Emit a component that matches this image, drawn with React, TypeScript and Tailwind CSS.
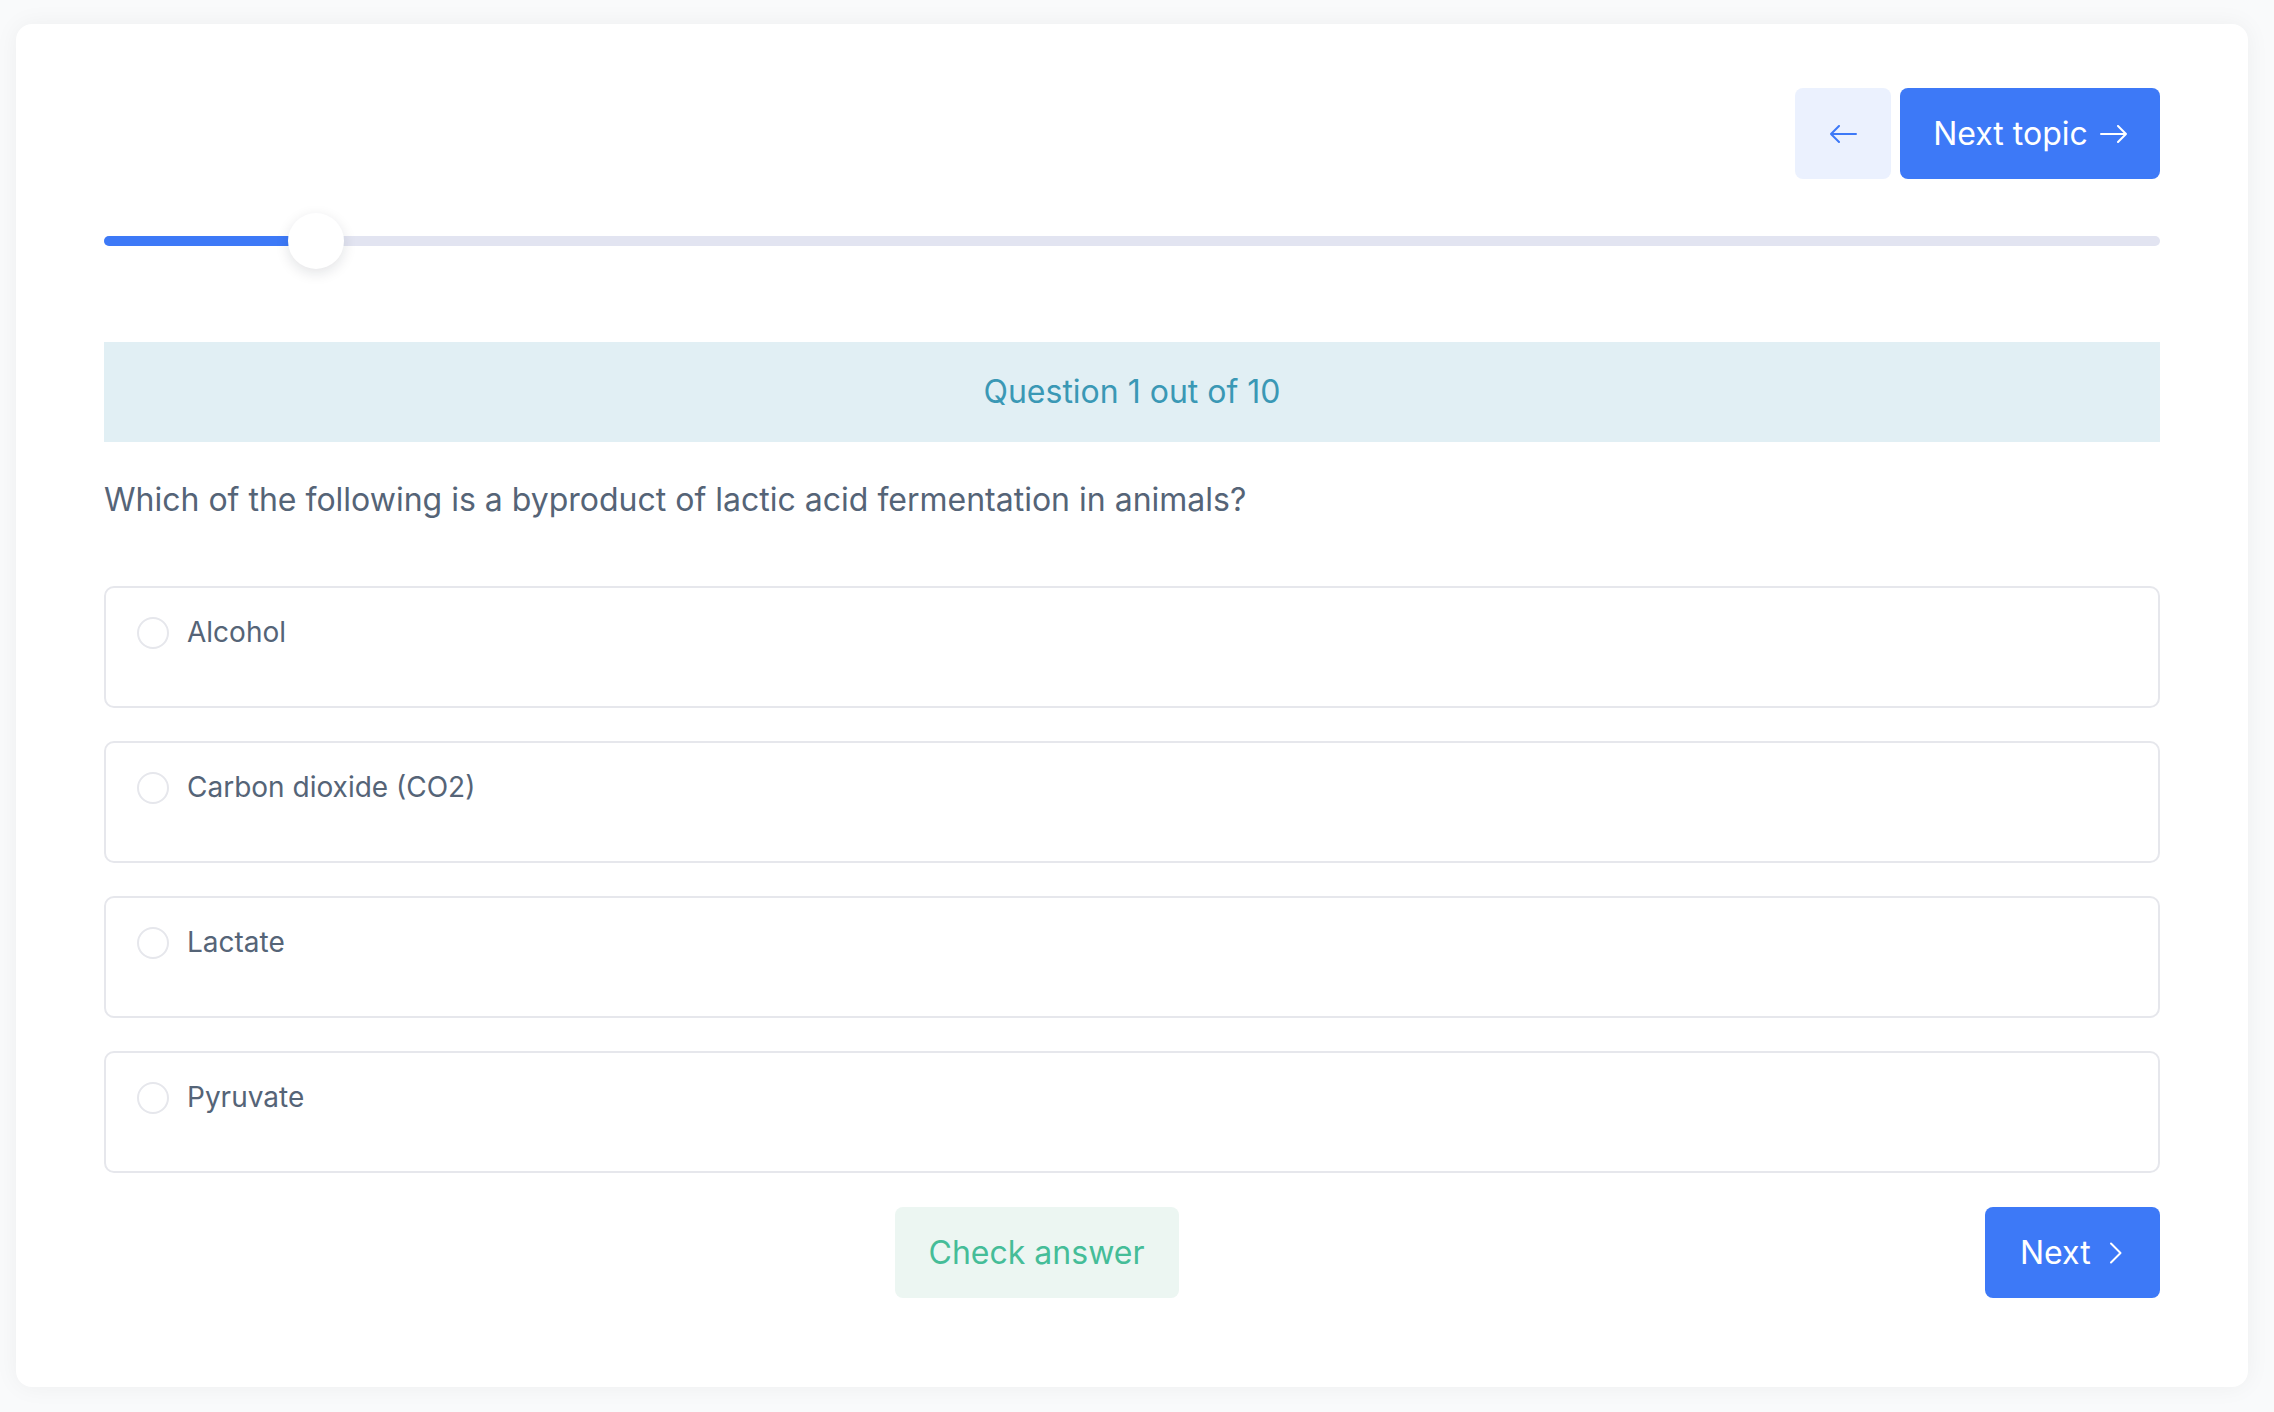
import React from "react";

const options = ["Alcohol", "Carbon dioxide (CO2)", "Lactate", "Pyruvate"];

function Slider({ value }: { value: number }) {
  return (
    <div className="relative h-[56px] flex items-center">
      <div className="w-full h-[10px] rounded-full bg-[#e2e4f1]" />
      <div
        className="absolute left-0 top-[23px] h-[10px] rounded-full bg-[#3d79f7]"
        style={{ width: `${value}px` }}
      />
      <div
        className="absolute top-0 w-[56px] h-[56px] rounded-full bg-white shadow-[0_4px_14px_rgba(15,23,42,0.12)]"
        style={{ left: `${value - 16}px` }}
      />
    </div>
  );
}

function Arrow({ dir, color }: { dir: "left" | "right"; color: string }) {
  const d = dir === "left" ? "M1 9 H26 M1 9 L9 1 M1 9 L9 17" : "M1 9 H26 M26 9 L18 1 M26 9 L18 17";
  return (
    <svg width="27" height="18" viewBox="0 0 27 18" fill="none">
      <path d={d} stroke={color} strokeWidth="2" strokeLinecap="round" strokeLinejoin="round" />
    </svg>
  );
}

function Option({ label }: { label: string }) {
  return (
    <label className="flex items-start h-[122px] rounded-[10px] border-2 border-[#e6e7ec] bg-white px-[31px] pt-[22px] cursor-pointer">
      <div className="flex items-center gap-[18px] h-[45px]">
        <span className="w-[32px] h-[32px] rounded-full border-2 border-[#e6e7ec] bg-white" />
        <span className="text-[28px] leading-[45px] text-[#556477]">{label}</span>
      </div>
    </label>
  );
}

export default function App() {
  return (
    <div
      className="min-h-[1412px] w-full bg-[#f9fafb] pl-[16px] pr-[26px] pt-[24px] pb-[25px]"
      style={{ fontFamily: "Inter, 'Noto Sans', sans-serif" }}
    >
      <div className="bg-white rounded-2xl shadow-[0_0_24px_rgba(15,23,42,0.05)] px-[88px] pt-[64px] pb-[89px]">
        {/* top navigation */}
        <div className="flex justify-end gap-[9px] h-[91px]">
          <button className="w-[96px] h-[91px] rounded-[8px] bg-[#ebf1fe] flex items-center justify-center">
            <Arrow dir="left" color="#3d79f7" />
          </button>
          <button className="w-[260px] h-[91px] rounded-[8px] bg-[#3d79f7] text-white text-[32px] flex items-center justify-center gap-[12px]">
            <span>Next topic</span>
            <Arrow dir="right" color="#ffffff" />
          </button>
        </div>

        {/* progress */}
        <div className="mt-[34px]">
          <Slider value={200} />
        </div>

        {/* question counter */}
        <div className="mt-[73px] h-[100px] bg-[#e1eff4] flex items-center justify-center">
          <span className="text-[32px] text-[#3a98b5]">Question 1 out of 10</span>
        </div>

        <p className="mt-[34px] text-[32px] leading-[48px] text-[#556477]">
          Which of the following is a byproduct of lactic acid fermentation in animals?
        </p>

        <div className="mt-[62px] flex flex-col gap-[33px]">
          {options.map((o) => (
            <Option key={o} label={o} />
          ))}
        </div>

        {/* actions */}
        <div className="mt-[34px] flex gap-4 h-[91px]">
          <div className="flex-1 flex justify-center">
            <button className="w-[284px] h-[91px] rounded-[8px] bg-[#ecf6f2] text-[#45bd98] text-[32px]">
              Check answer
            </button>
          </div>
          <button className="w-[175px] h-[91px] rounded-[8px] bg-[#3d79f7] text-white text-[32px] flex items-center pl-[35px] gap-[18px]">
            <span>Next</span>
            <svg width="14" height="22" viewBox="0 0 14 22" fill="none">
              <path d="M2 1.5 L11.5 11 L2 20.5" stroke="white" strokeWidth="2" strokeLinecap="round" strokeLinejoin="round" />
            </svg>
          </button>
        </div>
      </div>
    </div>
  );
}
